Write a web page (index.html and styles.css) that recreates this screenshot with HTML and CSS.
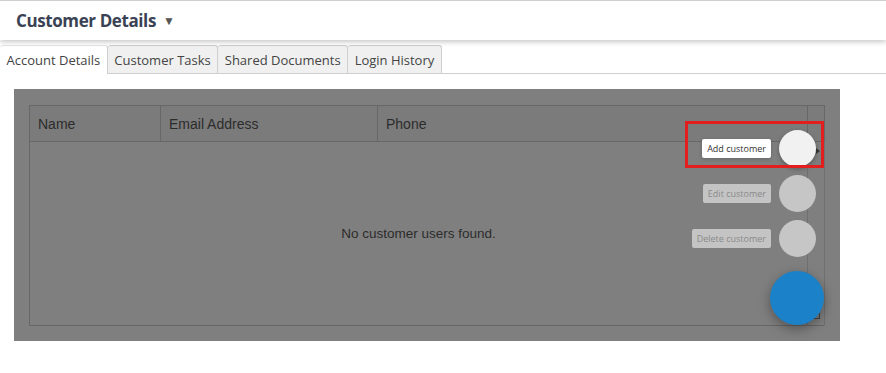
FILE: index.html
```html
<!DOCTYPE html>
<html lang="en">
<head>
    <meta charset="UTF-8">
    <meta name="viewport" content="width=device-width, initial-scale=1.0">
    <title>Customer Details</title>
    <link rel="stylesheet" href="styles.css">
</head>
<body>
    <div class="page-header">
        <h1>Customer Details <span class="caret">&#9660;</span></h1>
    </div>

    <ul class="tabs">
        <li class="tab active">Account Details</li>
        <li class="tab">Customer Tasks</li>
        <li class="tab">Shared Documents</li>
        <li class="tab">Login History</li>
    </ul>

    <div class="panel">
        <table class="grid">
            <colgroup>
                <col class="col-name">
                <col class="col-email">
                <col class="col-phone">
                <col>
            </colgroup>
            <thead>
                <tr>
                    <th>Name</th>
                    <th>Email Address</th>
                    <th>Phone</th>
                    <th></th>
                </tr>
            </thead>
            <tbody>
                <tr>
                    <td colspan="3" class="empty">No customer users found.</td>
                    <td class="col-end"><span class="arrow"></span><span class="grip"></span></td>
                </tr>
            </tbody>
        </table>

        <div class="fab-menu">
            <div class="fab-item">
                <span class="fab-label add">Add customer</span>
                <span class="mini add"></span>
            </div>
            <div class="fab-item">
                <span class="fab-label">Edit customer</span>
                <span class="mini"></span>
            </div>
            <div class="fab-item">
                <span class="fab-label">Delete customer</span>
                <span class="mini"></span>
            </div>
            <div class="fab"></div>
        </div>

        <div class="highlight"></div>
    </div>
</body>
</html>
```

FILE: styles.css
```css
body {
    font-family: "Open Sans", Arial, sans-serif;
    background-color: #fff;
    margin: 0;
    padding: 0;
}

.page-header {
    border-top: 1px solid #cfcfcf;
    height: 39px;
    padding: 0 16px;
    background: #fff;
    box-shadow: 0 2px 5px rgba(0, 0, 0, 0.22);
    position: relative;
}

h1 {
    margin: 0;
    font-size: 17px;
    letter-spacing: -0.4px;
    line-height: 39px;
    font-weight: 700;
    color: #3a4254;
}

.caret {
    font-size: 12px;
    color: #555;
    vertical-align: 2px;
    margin-left: 3px;
    letter-spacing: 0;
}

.tabs {
    list-style: none;
    display: flex;
    margin: 5px 0 0;
    padding: 0;
    border-bottom: 1px solid #cfcfcf;
}

.tab {
    font-size: 13px;
    color: #444;
    background: #f0f0f0;
    border: 1px solid #cfcfcf;
    border-left: none;
    border-bottom: none;
    border-radius: 3px 3px 0 0;
    height: 27px;
    line-height: 29px;
    padding: 0 6.5px;
    margin-bottom: -1px;
}

.tab.active {
    background: #fff;
    height: 28px;
    border-top: 1px solid #e4e4e4;
}

.panel {
    position: relative;
    background: #7f7f7f;
    margin: 15px 46px 0 14px;
    padding: 16px 15px 15px;
    height: 221px;
}

.grid {
    width: 796px;
    height: 221px;
    table-layout: fixed;
    border-collapse: collapse;
    font-family: "Liberation Sans", Arial, sans-serif;
    color: #2c2c2c;
    border: 1px solid #676767;
}

.col-name { width: 131px; }
.col-email { width: 217px; }
.col-phone { width: 430px; }

.grid th {
    text-align: left;
    font-weight: normal;
    font-size: 14px;
    height: 35px;
    padding: 0 8px;
    background: #7b7b7b;
    border: 1px solid #676767;
}

.grid td {
    border-right: 1px solid #707070;
}

.empty {
    text-align: center;
    font-size: 13.5px;
    padding-top: 0;
}

.col-end {
    position: relative;
}

.arrow {
    position: absolute;
    left: 8px;
    top: 6px;
    border-left: 4px solid #3a3a3a;
    border-top: 3px solid transparent;
    border-bottom: 3px solid transparent;
}

.grip {
    position: absolute;
    right: 4px;
    bottom: 6px;
    width: 5px;
    height: 5px;
    border-right: 1px solid #444;
    border-bottom: 1px solid #444;
}

.fab-menu {
    position: absolute;
    right: 16px;
    top: 41px;
    display: flex;
    flex-direction: column;
    align-items: flex-end;
    gap: 8px;
}

.fab-item {
    display: flex;
    align-items: center;
    gap: 8px;
    margin-right: 8px;
}

.fab-label {
    font-size: 9px;
    line-height: 19px;
    padding: 0 5px;
    border-radius: 2px;
    background: #c4c4c4;
    color: #8a8a8a;
}

.fab-label.add {
    background: #fff;
    color: #333;
    box-shadow: 0 1px 4px rgba(0, 0, 0, 0.2);
}

.mini {
    width: 37px;
    height: 37px;
    border-radius: 50%;
    background: #c6c6c6;
}

.mini.add {
    background: #f1f1f1;
    box-shadow: 0 2px 5px rgba(0, 0, 0, 0.3);
}

.fab {
    width: 54px;
    height: 54px;
    border-radius: 50%;
    background: #1b82c9;
    margin-top: 6px;
    box-shadow: 0 4px 12px rgba(0, 0, 0, 0.35);
}

.highlight {
    position: absolute;
    left: 671px;
    top: 32px;
    width: 133px;
    height: 41px;
    border: 3px solid #e31e1e;
}
```
